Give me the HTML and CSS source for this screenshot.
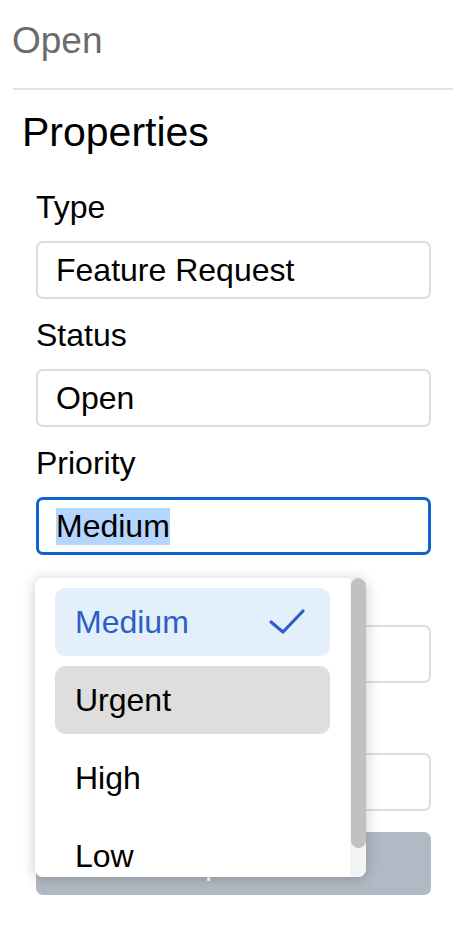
FILE: index.html
```html
<!DOCTYPE html>
<html lang="en">
<head>
    <meta charset="UTF-8">
    <meta name="viewport" content="width=device-width, initial-scale=1.0">
    <title>Issue Properties</title>
    <link rel="stylesheet" href="styles.css">
</head>
<body>
    <div class="page">
        <div class="state">Open</div>
        <div class="divider"></div>

        <div class="properties">
            <h2>Properties</h2>
            <div class="form">
                <label class="label">Type</label>
                <div class="field">Feature Request</div>

                <label class="label">Status</label>
                <div class="field">Open</div>

                <label class="label">Priority</label>
                <div class="select">
                    <div class="field focused"><span class="selected-text">Medium</span></div>

                    <!-- open option list -->
                    <div class="dropdown">
                        <ul class="options">
                            <li class="option active">
                                Medium
                                <svg class="check" width="36" height="28" viewBox="0 0 36 28">
                                    <polyline points="2,14 14,24 34,3" fill="none" stroke="#2c5fc4" stroke-width="3.2" stroke-linecap="round" stroke-linejoin="round"/>
                                </svg>
                            </li>
                            <li class="option hover">Urgent</li>
                            <li class="option">High</li>
                            <li class="option">Low</li>
                        </ul>
                        <div class="scrollbar"><div class="thumb"></div></div>
                    </div>
                </div>

                <label class="label">Assignee</label>
                <div class="field"></div>

                <label class="label">Due Date</label>
                <div class="field"></div>

                <button class="save-btn">Update</button>
            </div>
        </div>
    </div>
</body>
</html>
```

FILE: styles.css
```css
body {
    margin: 0;
    font-family: "Liberation Sans", Arial, sans-serif;
    color: #000;
    background: #fff;
}
.page {
    padding: 20px 15px 0 12px;
}
.state {
    font-size: 37px;
    line-height: 41px;
    color: #6b6b6b;
}
.divider {
    margin: 27px 0 0 1px;
    border-top: 2px solid #e2e2e2;
}
.properties h2 {
    margin: 19px 0 0 10px;
    font-size: 41px;
    line-height: 46px;
    font-weight: normal;
}
.form {
    display: flex;
    flex-direction: column;
    margin: 34px 22px 0 24px;
}
.label {
    font-size: 32px;
    line-height: 37px;
    margin-bottom: 15px;
}
.field {
    display: flex;
    align-items: center;
    height: 58px;
    box-sizing: border-box;
    padding: 0 18px;
    margin-bottom: 18px;
    border: 2px solid #dcdcdc;
    border-radius: 7px;
    font-size: 32px;
}
.field.focused {
    border: 3px solid #0d63cf;
    padding: 0 17px;
}
.selected-text {
    line-height: 37px;
    background-color: #b4d5fd;
}
.select {
    position: relative;
}
.dropdown {
    position: absolute;
    top: 81px;
    left: -1px;
    width: 331px;
    height: 299px;
    background: #fff;
    border-radius: 8px;
    box-shadow: 0 2px 14px rgba(0, 0, 0, 0.22);
    overflow: hidden;
    z-index: 2;
}
.options {
    list-style: none;
    margin: 0;
    padding: 10px 36px 0 20px;
}
.option {
    display: flex;
    align-items: center;
    justify-content: space-between;
    height: 68px;
    padding: 0 25px 0 20px;
    margin-bottom: 10px;
    border-radius: 10px;
    font-size: 32px;
}
.option.active {
    background-color: #e3f0fc;
    color: #2c5fc4;
}
.option.hover {
    background-color: #dedede;
}
.scrollbar {
    position: absolute;
    top: 0;
    right: 0;
    bottom: 0;
    width: 16px;
    background: #f3f3f3;
}
.thumb {
    width: 15px;
    height: 270px;
    margin-left: 1px;
    border-radius: 8px;
    background: #c1c1c1;
}
.save-btn {
    height: 63px;
    margin-top: 3px;
    border: none;
    border-radius: 7px;
    background-color: #b1bac4;
    color: #fff;
    font-family: inherit;
    font-size: 32px;
}
```
